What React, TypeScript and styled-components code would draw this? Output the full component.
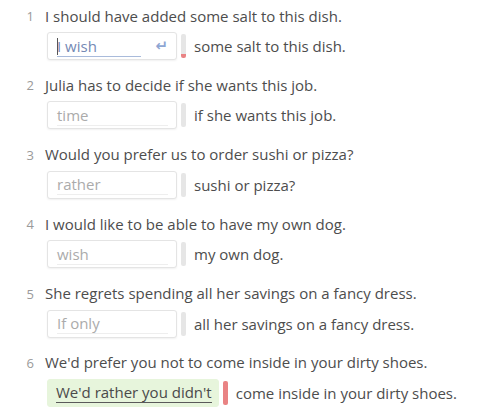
import styled, { createGlobalStyle } from 'styled-components';

const Global = createGlobalStyle`
  body {
    margin: 0;
    background: #ffffff;
    font-family: "Open Sans", "Liberation Sans", sans-serif;
    color: #4d4d4d;
  }
`;

const List = styled.ol`
  list-style: none;
  margin: 0;
  padding: 4px 0 0 0;
`;

const Item = styled.li`
  margin-bottom: 13.4px;
`;

const Prompt = styled.div`
  display: grid;
  grid-template-columns: 34px 1fr;
  column-gap: 11px;
  align-items: center;
  height: 22px;
  font-size: 15px;
  line-height: 22px;
`;

const Num = styled.span`
  text-align: right;
  font-size: 13px;
  line-height: 22px;
  padding-top: 1px;
  color: #9a9a9a;
`;

const AnswerRow = styled.div`
  display: flex;
  align-items: center;
  margin-top: 6px;
  padding-left: 47px;
  height: 28px;
  font-size: 15px;
`;

const Field = styled.div<{ $state: 'empty' | 'active' | 'correct' }>`
  box-sizing: border-box;
  height: 28px;
  display: flex;
  align-items: center;
  padding: ${p => (p.$state === 'correct' ? '0 6px 0 8px' : '0 8px 0 9px')};
  width: ${p => (p.$state === 'correct' ? 'auto' : '130px')};
  border-radius: 3px;
  background: ${p => (p.$state === 'correct' ? '#e7f5dc' : '#ffffff')};
  border: 1px solid ${p => (p.$state === 'correct' ? '#e7f5dc' : '#e4e4e4')};
  box-shadow: ${p => (p.$state === 'correct' ? 'none' : '0 1px 2px rgba(0,0,0,0.06)')};
`;

const Entry = styled.span<{ $state: 'empty' | 'active' | 'correct' }>`
  flex: ${p => (p.$state === 'correct' ? '0 0 auto' : '1')};
  line-height: 20px;
  border-bottom: 1px solid
    ${p => (p.$state === 'active' ? '#a9bbdb' : p.$state === 'correct' ? '#5a5a5a' : '#eeeeee')};
  color: ${p => (p.$state === 'active' ? '#7489b4' : p.$state === 'correct' ? '#4a4a4a' : '#ababab')};
  margin-right: ${p => (p.$state === 'active' ? '14px' : '0')};
  white-space: nowrap;
`;

const Caret = styled.span`
  display: inline-block;
  width: 1px;
  height: 17px;
  background: #555;
  vertical-align: -3px;
  margin-right: -1px;
`;

const Enter = styled.span`
  color: #8ea6d3;
  font-size: 15px;
  font-weight: bold;
  font-family: "DejaVu Sans", sans-serif;
`;

const Marker = styled.span<{ $fill: number; $tone: 'grey' | 'red' }>`
  width: 5px;
  height: 24px;
  margin: 0 8px 0 4px;
  border-radius: 2px;
  background: ${p =>
    p.$tone === 'red'
      ? '#e98384'
      : `linear-gradient(to top, #e98384 ${p.$fill}%, #e6e6e6 ${p.$fill}%)`};
`;

const Rest = styled.span`
  white-space: nowrap;
`;

type Q = {
  text: string;
  value: string;
  state: 'empty' | 'active' | 'correct';
  rest: string;
};

const questions: Q[] = [
  { text: 'I should have added some salt to this dish.', value: 'I wish', state: 'active', rest: 'some salt to this dish.' },
  { text: 'Julia has to decide if she wants this job.', value: 'time', state: 'empty', rest: 'if she wants this job.' },
  { text: 'Would you prefer us to order sushi or pizza?', value: 'rather', state: 'empty', rest: 'sushi or pizza?' },
  { text: 'I would like to be able to have my own dog.', value: 'wish', state: 'empty', rest: 'my own dog.' },
  { text: 'She regrets spending all her savings on a fancy dress.', value: 'If only', state: 'empty', rest: 'all her savings on a fancy dress.' },
  { text: "We'd prefer you not to come inside in your dirty shoes.", value: "We'd rather you didn't", state: 'correct', rest: 'come inside in your dirty shoes.' },
];

const App = (): JSX.Element => (
  <>
    <Global />
    <List>
      {questions.map((q, i) => (
        <Item key={i}>
          <Prompt>
            <Num>{i + 1}</Num>
            <span>{q.text}</span>
          </Prompt>
          <AnswerRow>
            <Field $state={q.state}>
              <Entry $state={q.state}>
                {q.state === 'active' && <Caret />}
                {q.value}
              </Entry>
              {q.state === 'active' && <Enter>↵</Enter>}
            </Field>
            <Marker $tone={q.state === 'correct' ? 'red' : 'grey'} $fill={q.state === 'active' ? 18 : 0} />
            <Rest>{q.rest}</Rest>
          </AnswerRow>
        </Item>
      ))}
    </List>
  </>
);

export default App;
